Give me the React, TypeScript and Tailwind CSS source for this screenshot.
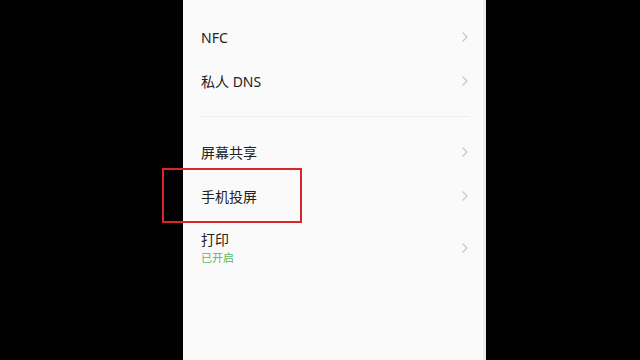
import { ReactNode } from 'react'

function Chevron() {
  return (
    <svg className="h-[10px] w-[6px] text-[#c9c9c9]" viewBox="0 0 6 10" fill="none" stroke="currentColor" strokeWidth={1.3}>
      <path strokeLinecap="round" strokeLinejoin="round" d="M1 1l4 4-4 4" />
    </svg>
  )
}

function Row({ children, h = 'h-[44px]' }: { children: ReactNode; h?: string }) {
  return (
    <div className={`flex ${h} items-center justify-between pl-[18px] pr-[15px]`}>
      <div>{children}</div>
      <Chevron />
    </div>
  )
}

export default function App() {
  return (
    <div
      className="flex h-[360px] w-[640px] overflow-hidden bg-black"
      style={{ fontFamily: '"Noto Sans", "Noto Sans CJK SC", sans-serif' }}
    >
      <div className="ml-[183px] flex h-full w-[303px] border-r-[3px] border-[#ececec] bg-[#fafafa]">
        <div className="flex w-full flex-col pt-[15px] text-[14px] text-[#222]">
          <Row>NFC</Row>
          <Row>私人 DNS</Row>

          {/* Divider */}
          <div className="py-[13px] pl-[17px] pr-[13px]">
            <div className="h-px bg-[#eeeeee]" />
          </div>

          <Row>屏幕共享</Row>

          <div className="relative">
            <Row>手机投屏</Row>
            {/* highlight annotation */}
            <div className="pointer-events-none absolute left-[-21px] top-[-6px] h-[55px] w-[140px] border-2 border-[#d8262b]" />
          </div>

          <Row h="h-[60px]">
            <div className="leading-[20px]">打印</div>
            <div className="text-[11px] leading-[16px] text-[#5cb85c]">已开启</div>
          </Row>
        </div>
      </div>
    </div>
  )
}
